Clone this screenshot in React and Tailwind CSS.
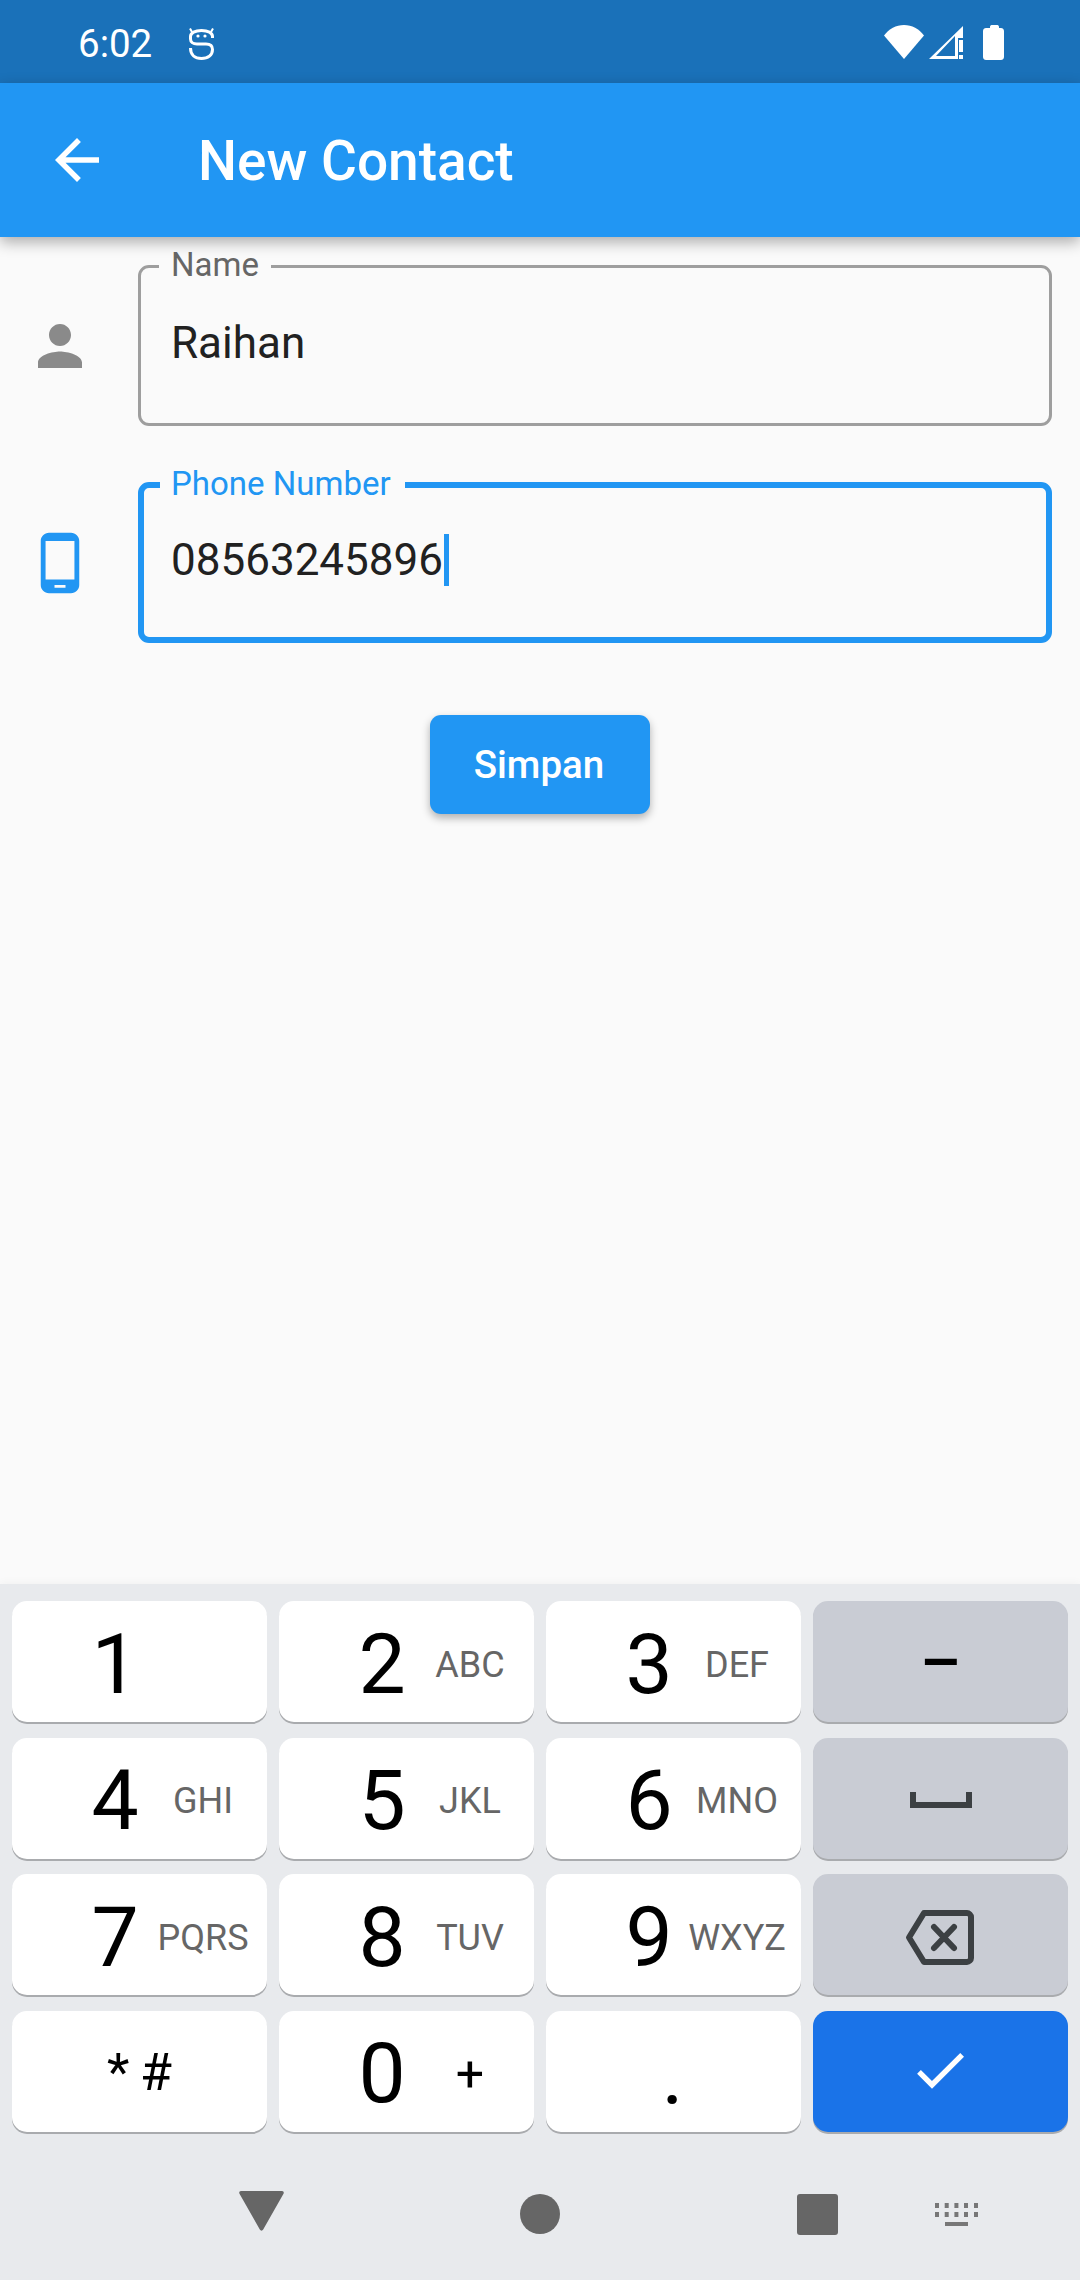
import React from "react";

function MIcon({ d, className }) {
  return (
    <svg viewBox="0 0 24 24" className={className} fill="currentColor">
      <path d={d} />
    </svg>
  );
}

function Field({ label, value, focused }) {
  return (
    <div
      className={
        "relative flex h-[161px] w-[914px] items-center rounded-[11px] pb-[6px] " +
        (focused ? "border-[6px] border-[#2196f3] pl-[27px]" : "border-[3px] border-[#9e9e9e] pl-[30px]")
      }
    >
      <span
        className={
          "absolute top-0 -translate-y-1/2 whitespace-nowrap bg-[#fafafa] text-[33px] leading-[38px] " +
          (focused ? "left-[16px] -mt-[4px] pl-[11px] pr-[14px] text-[#2196f3]" : "left-[18px] -mt-[3px] px-[12px] text-[#666666]")
        }
      >
        {label}
      </span>
      <span className="text-[44px] leading-[52px] text-[#212121]">{value}</span>
      {focused && <span className="ml-[1px] h-[52px] w-[5px] bg-[#2196f3]" />}
    </div>
  );
}

function Key({ digit, letters }) {
  return (
    <div className="flex h-[121px] items-center rounded-[15px] bg-white pl-[60px] pt-[6px] shadow-[0_2px_0_#a9abae]">
      <span className="w-[86px] text-center text-[84px] leading-[100px] text-black">{digit}</span>
      <span className="flex w-[90px] justify-center whitespace-nowrap text-[36px] leading-[42px] text-[#666666]">{letters}</span>
    </div>
  );
}

function SideKey({ children, className }) {
  return (
    <div className={"flex h-[121px] items-center justify-center rounded-[15px] shadow-[0_2px_0_#a9abae] " + className}>
      {children}
    </div>
  );
}

export default function App() {
  return (
    <div className="flex h-[2280px] w-[1080px] flex-col overflow-hidden bg-[#fafafa] font-[Roboto,sans-serif]">
      {/* status bar */}
      <div className="flex h-[83px] shrink-0 items-center bg-[#1a71b9] pl-[78px] pt-[4px] text-white">
        <span className="text-[38.5px] leading-[44px]">6:02</span>
        <svg viewBox="0 0 25 33" className="ml-[37px] h-[33px] w-[25px]" fill="none" stroke="white" strokeWidth="3">
          <path d="M23.5 11V9.5C23.5 6 19 3.5 12.5 3.5S1.5 6 1.5 9.5V12C1.5 15 4 17 8 17H17C21 17 23.5 19 23.5 22.5C23.5 28 19 31.5 12.5 31.5S1.5 28 1.5 21" />
          <circle cx="9" cy="9" r="1.6" fill="white" stroke="none" />
          <circle cx="16" cy="9" r="1.6" fill="white" stroke="none" />
          <path d="M3 5L1 1.5M22 5L24 1.5" strokeWidth="2" />
        </svg>
        <svg viewBox="0 0 120 35" className="-mt-[2px] ml-[670px] h-[35px] w-[120px]" fill="white">
          <path d="M0 10.5C5 4 12 0 20 0s15 4 20 10.5L20 34z" />
          <path fillRule="evenodd" d="M45 34L79 1v12h-5v21zM52 31h19V11z" />
          <path d="M75 15h4v12h-4zM75 30h4v4h-4z" />
          <path d="M99 6c0-1.7 1.5-3 3-3h4V2c0-1 .6-2 1.5-2h6c.9 0 1.5 1 1.5 2v1h2c1.5 0 3 1.3 3 3v26c0 1.7-1.5 3-3 3H102c-1.5 0-3-1.3-3-3z" />
        </svg>
      </div>

      {/* app bar */}
      <div className="relative z-10 flex h-[154px] shrink-0 items-center bg-[#2196f3] text-white shadow-[0_5px_14px_rgba(0,0,0,0.32)]">
        <MIcon
          d="M20 11H7.83l5.59-5.59L12 4l-8 8 8 8 1.41-1.41L7.83 13H20v-2z"
          className="ml-[44px] h-[66px] w-[66px]"
        />
        <span className="ml-[88px] pt-[2px] text-[55px] leading-[64px] font-medium">New Contact</span>
      </div>

      {/* form */}
      <div className="flex flex-1 flex-col pt-[28px]">
        <div className="flex items-center pl-[27px]">
          <MIcon
            d="M12 12c2.21 0 4-1.79 4-4s-1.79-4-4-4-4 1.79-4 4 1.79 4 4 4zm0 2c-2.67 0-8 1.34-8 4v2h16v-2c0-2.66-5.33-4-8-4z"
            className="mr-[45px] h-[66px] w-[66px] text-[#8a8a8a]"
          />
          <Field label="Name" value="Raihan" />
        </div>
        <div className="mt-[56px] flex items-center pl-[27px]">
          <MIcon
            d="M16 1H8C6.34 1 5 2.34 5 4v16c0 1.66 1.34 3 3 3h8c1.66 0 3-1.34 3-3V4c0-1.66-1.34-3-3-3zm-2 20h-4v-1h4v1zm3.25-3H6.75V4h10.5v14z"
            className="mr-[45px] h-[66px] w-[66px] text-[#2196f3]"
          />
          <Field label="Phone Number" value="08563245896" focused />
        </div>
        <button className="mx-auto mt-[72px] flex h-[99px] w-[220px] items-center justify-center rounded-[11px] bg-[#2196f3] pr-[2px] text-[38.5px] font-medium text-white shadow-[0_4px_8px_rgba(0,0,0,0.3)]">
          Simpan
        </button>
      </div>

      {/* keyboard */}
      <div className="h-[696px] shrink-0 bg-[#e8eaed] shadow-[0_-2px_8px_rgba(0,0,0,0.03)]">
        <div className="grid grid-cols-[255px_255px_255px_255px] gap-x-[12px] gap-y-[15.6px] pl-[12px] pt-[17px]">
          <Key digit="1" />
          <Key digit="2" letters="ABC" />
          <Key digit="3" letters="DEF" />
          <SideKey className="bg-[#c9ccd4] pt-[5px]">
            <span className="text-[64px] leading-[70px] font-medium text-black">–</span>
          </SideKey>
          <Key digit="4" letters="GHI" />
          <Key digit="5" letters="JKL" />
          <Key digit="6" letters="MNO" />
          <SideKey className="bg-[#c9ccd4] pt-[3px]">
            <svg viewBox="0 0 62 16" className="h-[16px] w-[62px]" fill="#3c4043">
              <path d="M0 0h6v10h50V0h6v16H0z" />
            </svg>
          </SideKey>
          <Key digit="7" letters="PQRS" />
          <Key digit="8" letters="TUV" />
          <Key digit="9" letters="WXYZ" />
          <SideKey className="bg-[#c9ccd4] pr-[2px] pt-[5px]">
            <svg viewBox="0 0 69 55" className="h-[55px] w-[69px]" fill="none" stroke="#3c4043" strokeWidth="6" strokeLinejoin="round">
              <path d="M19 3H62c2 0 4 2 4 4v41c0 2-2 4-4 4H19L4 27.5z" />
              <path d="M29 17l20 21M49 17L29 38" strokeLinecap="round" />
            </svg>
          </SideKey>
          <div className="flex h-[121px] items-center justify-center rounded-[15px] bg-white pt-[4px] shadow-[0_2px_0_#a9abae]">
            <span className="text-[52px] leading-[60px] text-black">*&thinsp;#</span>
          </div>
          <div className="flex h-[121px] items-center rounded-[15px] bg-white pl-[60px] pt-[6px] shadow-[0_2px_0_#a9abae]">
            <span className="w-[86px] text-center text-[84px] leading-[100px] text-black">0</span>
            <span className="w-[90px] text-center text-[50px] leading-[60px] text-black">+</span>
          </div>
          <div className="flex h-[121px] items-end justify-center rounded-[15px] bg-white pb-[6px] pr-[2px] shadow-[0_2px_0_#a9abae]">
            <span className="text-[84px] leading-[100px] text-black">.</span>
          </div>
          <SideKey className="bg-[#1a73e8] pb-[2px] pr-[1px]">
            <MIcon d="M9 16.17L4.83 12l-1.41 1.41L9 19 21 7l-1.41-1.41z" className="h-[64px] w-[64px] text-white" />
          </SideKey>
        </div>

        {/* nav bar */}
        <div className="flex items-center pl-[239px] pt-[62px]">
          <svg viewBox="0 0 45 40" className="-mt-[6px] h-[40px] w-[45px]" fill="#666666">
            <path d="M2 0h41c1.5 0 2.2 1.4 1.5 2.8L24.2 38.5c-.8 1.5-2.6 1.5-3.4 0L.5 2.8C-.2 1.4.5 0 2 0z" />
          </svg>
          <div className="ml-[236px] h-[40px] w-[40px] rounded-full bg-[#666666]" />
          <div className="ml-[237px] h-[41px] w-[41px] rounded-[3px] bg-[#666666]" />
          <svg viewBox="0 0 43 23" className="ml-[97px] h-[23px] w-[43px]" fill="#777777">
            <path d="M0 0h4v5H0zM9.7 0h4v5h-4zM19.4 0h4v5h-4zM29 0h4v5h-4zM39 0h4v5h-4zM0 9h4v5H0zM9.7 9h4v5h-4zM19.4 9h4v5h-4zM29 9h4v5h-4zM39 9h4v5h-4zM10 19h23v4H10z" />
          </svg>
        </div>
      </div>
    </div>
  );
}
